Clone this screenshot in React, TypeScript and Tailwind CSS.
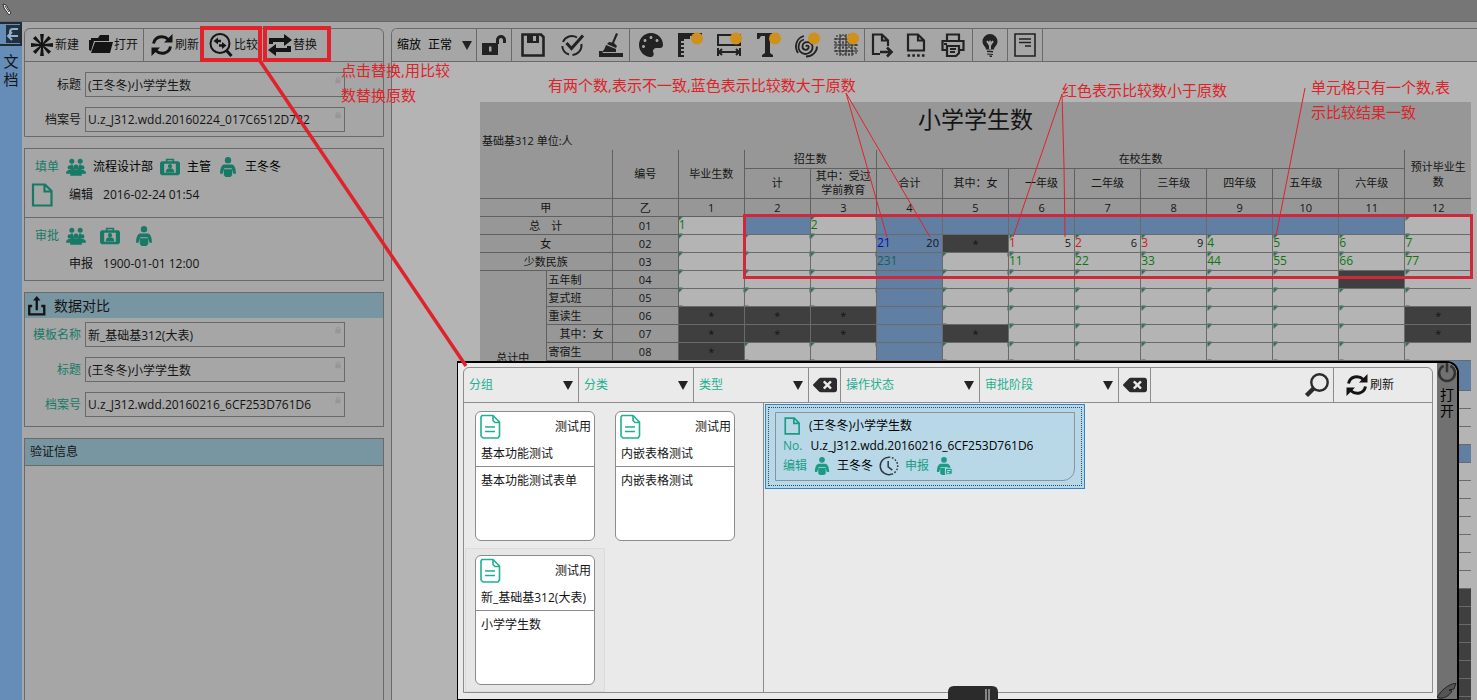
import type { ReactNode } from 'react';
import { clsx } from 'clsx';
import { FaBackspace, FaPalette } from 'react-icons/fa';

interface IconProps {
  className?: string;
}

interface SvgProps extends IconProps {
  children: ReactNode;
  fill?: boolean;
  width?: number;
}

function Svg({ children, className = 'size-6', fill = false, width = 2 }: SvgProps) {
  return (
    <svg
      viewBox="0 0 24 24"
      aria-hidden="true"
      className={clsx('shrink-0 overflow-visible', className)}
      fill={fill ? 'currentColor' : 'none'}
      stroke={fill ? 'none' : 'currentColor'}
      strokeWidth={width}
    >
      {children}
    </svg>
  );
}

const NewIcon = () => (
  <Svg fill>
    {[0, 45, 90, 135, 180, 225, 270, 315].map((deg) => (
      <path key={deg} d="M11.3 12 10.1 1h3.8L12.7 12z" transform={`rotate(${deg} 12 12)`} />
    ))}
  </Svg>
);

const OpenIcon = () => (
  <Svg fill>
    <path d="M0 7h2V5h7l2-3h9v6H5L2 18 0 17zM6 9h18l-3 11H2z" />
  </Svg>
);

const RefreshIcon = ({ className }: IconProps) => (
  <Svg className={className} width={3}>
    <path d="M3.5 10.5C5 3.5 13 1.5 18.5 6.5M20.5 13.5C19 20.5 11 22.5 5.5 17.5" />
    <path d="M22.500 1v8.500H14l3-3zM1.500 23v-8.500H10l-3 3z" fill="currentColor" stroke="none" />
  </Svg>
);

const CompareIcon = () => (
  <Svg width={2}>
    <circle cx="11" cy="10.5" r="9.5" />
    <path d="m17.5 17.5 5 5.5" strokeWidth={3} />
    <path d="M4.5 8 9 4.5v2.200h3v2.600H9v2.200zM17.5 12.500 13 9v2.200h-3v2.600h3V16z" fill="currentColor" stroke="none" />
  </Svg>
);

const SwapIcon = () => (
  <Svg fill>
    <path d="M1 11V5h15V1l8 6-8 6V9H5v2zM23 13v6H8v4l-8-6 8-6v4h11v-2z" />
  </Svg>
);

const LockIcon = ({ className }: IconProps) => (
  <Svg className={className} fill>
    <path d="M4 10h2V8a6 6 0 0 1 12 0v2h2v12H4zm5 0h6V8a3 3 0 0 0-6 0z" />
  </Svg>
);

const UnlockIcon = () => (
  <Svg fill>
    <path d="M0 10h14V7a5 5 0 0 1 10 0v3h-3V7a2 2 0 0 0-4 0v4h-1v11H0zm7 3.500v5h2.500v-5z" fillRule="evenodd" />
  </Svg>
);

const SaveIcon = () => (
  <Svg width={2.6}>
    <path d="M1.5 1.5H20l2.500 2.500v18.500h-21z" />
    <path d="M6 1v9h12V1zm6 2h3v5h-3z" fill="currentColor" fillRule="evenodd" stroke="none" />
  </Svg>
);

const CheckIcon = () => (
  <Svg width={2}>
    <path d="M17 4.500A9.500 9.500 0 0 0 3 9M2.300 13A9.500 9.500 0 0 0 9 21.500M12.500 22A9.500 9.500 0 0 0 21.400 11" />
    <path d="m6.500 10 5 5.500L23 2.500" strokeWidth={3} />
  </Svg>
);

const BroomIcon = () => (
  <Svg fill>
    <path d="m17 0 2 1-4 9 3 3-1 2-9-4 2-2 3 .5zM7 12l10 4v3H3c2-2 3-4 4-7zM0 18h3l1 2h20v4H0z" />
  </Svg>
);

const Badge = () => <circle cx="19" cy="5.5" r="6" fill="#d0901c" stroke="none" />;

const RulerIcon = () => (
  <Svg fill>
    <path d="M0 0h24v6h-2V3h-2v3h-2V3h-2v3h-2V3h-2v3H6v2H3v2h3v2H3v2h3v2H3v2h3v2H3v2h3v2H0z" />
    <Badge />
  </Svg>
);

const SizeIcon = () => (
  <Svg width={2}>
    <path d="M1 2h22v10H1zM1 15v8M23 15v8M2 19h20M5 16l-3 3 3 3M19 16l3 3-3 3" />
    <Badge />
  </Svg>
);

const TypeIcon = () => (
  <Svg fill>
    <path d="M1 0h21v6h-2l-2-3h-4v17l3 2v2H6v-2l3-2V3H5L3 6H1z" />
    <Badge />
  </Svg>
);

const SpiralIcon = () => (
  <Svg width={1.8}>
    <path d="M11 13.500c1-2 3.500-.5 2.500 1.500-1.500 3-6.500 2-6-2 .5-5 9-5.500 10 .5.500 6-6.500 9-10.500 6.500C1.500 17 3 8 9 6.500M3 20C-1 14 1 5 9 3M11 23.500c6 0 11-4.500 11-10" />
    <Badge />
  </Svg>
);

const GridIcon = () => (
  <Svg width={1}>
    <path d="M0 6h24M0 12h24M0 18h24M6 1v22M12 1v22M18 1v22" />
    <path d="M2 3h20v18H2zM9 1v22M15 1v22M0 9h24M0 15h24" strokeDasharray="2 2" />
    <Badge />
  </Svg>
);

const ExportIcon = () => (
  <Svg width={2.2}>
    <path d="M10 21H3V1.500h9l6 6V13M12 1.500v6h6" />
    <path d="M10 19h11M17 14.500l4.500 4.500-4.500 4.500" strokeWidth={2.6} />
  </Svg>
);

const PageDotsIcon = () => (
  <Svg width={2.2}>
    <path d="M4 17.500v-16h10l6 6v10zM14 1.500v6h6" />
    <path d="M3.500 22.500h17" strokeWidth={2.6} strokeDasharray="2.600 2.200" />
  </Svg>
);

const PrintIcon = () => (
  <Svg width={2.2}>
    <path d="M6 8V1.500h12V8M6 17H1.500V8h21v9H18" />
    <path d="M6 13h12v7l-3 3H6zM9 16h6M9 19h5M3 11h3" />
  </Svg>
);

const BulbIcon = () => (
  <Svg fill>
    <path d="M12 1a7.500 7.500 0 0 1 7.500 7.500c0 4-3.500 5-3.500 8H8c0-3-3.500-4-3.500-8A7.500 7.500 0 0 1 12 1zM9 17.500l6 .5v1.500l-6-.5zM9 20.500l6 .5v1l-6-.5zM11 22.500h3V24h-2z" />
    <path d="m9 8 2 3 1-2 1 2 2-3M12 11v5" fill="none" stroke="#a6a6a6" />
  </Svg>
);

const NoteIcon = () => (
  <Svg width={1.6}>
    <path d="M2 1h20v22H2zM6 6h12M6 9.500h12M12 13h6" />
  </Svg>
);

const GroupIcon = ({ className = 'size-5' }: IconProps) => (
  <Svg className={className} fill>
    <circle cx="7" cy="5" r="3" />
    <circle cx="17" cy="5" r="3" />
    <circle cx="4.5" cy="12.5" r="2.6" />
    <circle cx="12" cy="12" r="3" />
    <circle cx="19.5" cy="12.5" r="2.6" />
    <path d="M0 20c0-4 3-4.500 5-4.500 2-.5 0-4 1-6.500h2l2 6h4l2-6h2c1 2.500-1 6 1 6.500 2 0 5 .5 5 4.500h-5v2.500H5V20z" />
  </Svg>
);

const BadgeCardIcon = ({ className = 'size-5' }: IconProps) => (
  <Svg className={className} fill>
    <path fillRule="evenodd" d="M7 5V2h10v3h5l2 2v13l-2 2H2l-2-2V7l2-2zm2 0h6V4H9zM5 8v11h14V8z" />
    <circle cx="12" cy="11" r="2.5" />
    <path d="M7 18.500c0-4 2-5 5-5s5 1 5 5z" />
  </Svg>
);

const PersonIcon = ({ className = 'size-5', children }: IconProps & { children?: ReactNode }) => (
  <Svg className={className} fill>
    <circle cx="12" cy="3.8" r="3.8" />
    <path d="M7 9h10c3 1 4.500 5 4.500 11h-3l-2-6.500h-9l-2 6.500h-3C2.500 14 4 10 7 9z" />
    <path d="M7 14.800h10v6.700L15 24H9l-2-2.500z" />
    {children}
  </Svg>
);

const FileIcon = ({ className = 'size-6' }: IconProps) => (
  <Svg className={className} width={2.2}>
    <path d="M3 1.500h12l6.500 6.500v14.500H3zM14.500 1.500V8.500h7" />
  </Svg>
);

const FormIcon = () => (
  <Svg className="size-6 text-[#1fb092]" width={1.6}>
    <path d="M3 .5h11l6.500 6.500V21L19 23H4l-2-2V2zM14 .5v5l2 2h4.500M6 12h10M6 16.500h10" />
  </Svg>
);

const UploadIcon = () => (
  <Svg className="size-5" width={2.8}>
    <path d="M5 12H1.500v10h18V12H16M10.500 17V4" />
    <path d="m6 5.500 4.500-5.500L15 5.500z" fill="currentColor" stroke="none" />
  </Svg>
);

const ClockIcon = () => (
  <Svg className="size-5 text-[#303a42]" width={1.8}>
    <path d="M13 1.500A10.500 10.500 0 1 0 15 22M11 6v7l5 4" />
    <path d="M15 22A10.500 10.500 0 0 0 13 1.500" strokeDasharray="2 2" />
  </Svg>
);

const SearchIcon = () => (
  <Svg width={2.4}>
    <circle cx="14.5" cy="9.5" r="8.200" />
    <path d="m8.500 15.500-7 7" strokeWidth={4.5} />
  </Svg>
);

const PowerIcon = () => (
  <Svg className="size-5" width={3}>
    <path d="M8 3.500a9.500 9.500 0 1 0 8 0M12 0v11" />
  </Svg>
);

interface FieldProps {
  id: string;
  label: string;
  value: string;
  accent?: boolean;
}

function Field({ id, label, value, accent }: FieldProps) {
  return (
    <div className="flex items-center gap-1">
      <label htmlFor={id} className={clsx('w-14 text-right', accent && 'text-[#167a66]')}>
        {label}
      </label>
      <div className="relative w-[260px]">
        <input id={id} readOnly defaultValue={value} className="block h-[25px] w-full border border-[#6a6a6a] px-[2px]" />
        <LockIcon className="absolute top-1 right-[3px] size-2 text-[#969696]" />
      </div>
    </div>
  );
}

function ToolButton({ icon, label }: { icon: ReactNode; label: string }) {
  return (
    <button type="button" className="flex items-center gap-px">
      {icon}
      {label}
    </button>
  );
}

function LeftPanel() {
  return (
    <aside className="flex w-[369px] shrink-0 flex-col gap-[11px] overflow-hidden pt-[6px] pr-[7px] pl-[2px]">
      <section className="h-[109px] shrink-0 rounded-t-md border border-[#6a6a6a]">
        <div className="flex h-[33px] items-center border-b border-[#6a6a6a]">
          <div className="flex h-full items-center gap-[10px] border-r border-[#6a6a6a] px-[5px]">
            <ToolButton icon={<NewIcon />} label="新建" />
            <ToolButton icon={<OpenIcon />} label="打开" />
          </div>
          <div className="flex items-center gap-[10px] pl-[6px]">
            <ToolButton icon={<RefreshIcon />} label="刷新" />
            <ToolButton icon={<CompareIcon />} label="比较" />
            <ToolButton icon={<SwapIcon />} label="替换" />
          </div>
        </div>
        <div className="flex flex-col gap-[10px] pt-[10px]">
          <Field id="title" label="标题" value="(王冬冬)小学学生数" />
          <Field id="code" label="档案号" value="U.z_J312.wdd.20160224_017C6512D722" />
        </div>
      </section>

      <section className="h-[133px] shrink-0 border border-[#6a6a6a]">
        <div className="h-[69px] border-b border-[#6a6a6a] pt-2">
          <div className="flex h-5 items-center gap-[7px] pl-[10px] text-[#167a66]">
            <span>填单</span>
            <GroupIcon />
            <span className="text-black">流程设计部</span>
            <BadgeCardIcon />
            <span className="text-black">主管</span>
            <PersonIcon />
            <span className="text-black">王冬冬</span>
          </div>
          <div className="mt-[6px] flex h-6 items-center pl-[5px]">
            <FileIcon className="size-6 text-[#167a66]" />
            <span className="ml-[15px]">编辑</span>
            <span className="ml-[10px]">2016-02-24 01:54</span>
          </div>
        </div>
        <div className="pt-2">
          <div className="flex h-5 items-center pl-[10px] text-[#167a66]">
            <span>审批</span>
            <GroupIcon className="ml-[7px] size-5" />
            <BadgeCardIcon className="ml-[14px] size-5" />
            <PersonIcon className="ml-[14px] size-5" />
          </div>
          <div className="mt-[6px] flex h-6 items-center pl-11">
            <span>申报</span>
            <span className="ml-[10px]">1900-01-01 12:00</span>
          </div>
        </div>
      </section>

      <section className="h-[135px] shrink-0 border border-[#6a6a6a]">
        <h2 className="flex h-[25px] items-center gap-[6px] bg-[#7896a2] pl-[3px] text-sm">
          <UploadIcon />
          数据对比
        </h2>
        <div className="flex flex-col gap-[10px] pt-1">
          <Field id="cmp-template" label="模板名称" value="新_基础基312(大表)" accent />
          <Field id="cmp-title" label="标题" value="(王冬冬)小学学生数" accent />
          <Field id="cmp-code" label="档案号" value="U.z_J312.wdd.20160216_6CF253D761D6" accent />
        </div>
      </section>

      <section className="flex-1 border border-b-0 border-[#6a6a6a]">
        <h2 className="flex h-[27px] items-center border-b border-[#6a6a6a] bg-[#7896a2] pl-[5px]">验证信息</h2>
      </section>
    </aside>
  );
}

interface ToolGroup {
  name: string;
  wide: boolean;
  tools: { name: string; icon: ReactNode }[];
}

const toolGroups: ToolGroup[] = [
  { name: 'lock', wide: false, tools: [{ name: '解锁', icon: <UnlockIcon /> }] },
  {
    name: 'file',
    wide: true,
    tools: [
      { name: '保存', icon: <SaveIcon /> },
      { name: '校验', icon: <CheckIcon /> },
      { name: '清除', icon: <BroomIcon /> },
    ],
  },
  {
    name: 'style',
    wide: true,
    tools: [
      { name: '颜色', icon: <FaPalette className="size-6" /> },
      { name: '标尺', icon: <RulerIcon /> },
      { name: '尺寸', icon: <SizeIcon /> },
      { name: '字体', icon: <TypeIcon /> },
      { name: '指纹', icon: <SpiralIcon /> },
      { name: '网格', icon: <GridIcon /> },
    ],
  },
  {
    name: 'output',
    wide: false,
    tools: [
      { name: '导出', icon: <ExportIcon /> },
      { name: '页面', icon: <PageDotsIcon /> },
      { name: '打印', icon: <PrintIcon /> },
    ],
  },
  { name: 'tip', wide: false, tools: [{ name: '提示', icon: <BulbIcon /> }] },
  { name: 'note', wide: false, tools: [{ name: '备注', icon: <NoteIcon /> }] },
];

function Triangle() {
  return (
    <svg viewBox="0 0 10 9" aria-hidden="true" className="h-[9px] w-[10px] fill-[#222]">
      <path d="M0 0h10L5 9z" />
    </svg>
  );
}

function MainToolbar() {
  return (
    <div className="flex h-[33px] shrink-0 border-b border-[#6a6a6a] bg-[#a6a6a6] text-[#222]">
      <div className="flex w-[85px] items-center gap-[7px] border-r border-[#6a6a6a] pl-[5px] text-black">
        <label htmlFor="zoom">缩放</label>
        <div className="relative">
          <select id="zoom" className="w-11 appearance-none">
            <option>正常</option>
          </select>
          <span className="pointer-events-none absolute top-0 right-0 bottom-0 flex items-center">
            <Triangle />
          </span>
        </div>
      </div>
      {toolGroups.map((group) => (
        <div key={group.name} className="flex border-r border-[#6a6a6a]">
          {group.tools.map((tool) => (
            <button
              key={tool.name}
              type="button"
              aria-label={tool.name}
              className={clsx('flex items-center justify-center', group.wide ? 'w-[39px] pl-[3px]' : 'w-[34px] last:not-first:w-[39px]')}
            >
              {tool.icon}
            </button>
          ))}
        </div>
      ))}
    </div>
  );
}

// '' editable, 'B' calculated, '*' not applicable, 'X' locked, 'a|b' compared value and original
type Cell = string;

interface Row {
  id: number;
  code?: string;
  label?: string;
  wide?: boolean;
  cells: Cell[];
}

const plain: Cell[] = ['', '', '', 'B', '', '', '', '', '', '', '', ''];
const calculated: Cell[] = Array(12).fill('B');
const locked: Cell[] = Array(12).fill('X');

const rows: Row[] = [
  { id: 1, code: '01', label: '总　计', wide: true, cells: ['1', 'B', '2', 'B', 'B', 'B', 'B', 'B', 'B', 'B', 'B', ''] },
  { id: 2, code: '02', label: '女', wide: true, cells: ['', '', '', 'B21|20', '*', '1|5', '2|6', '3|9', '4', '5', '6', '7'] },
  { id: 3, code: '03', label: '少数民族', wide: true, cells: ['', '', '', 'B231', '', '11', '22', '33', '44', '55', '66', '77'] },
  { id: 4, code: '04', label: '五年制', cells: ['', '', '', 'B', '', '', '', '', '', '', 'X', ''] },
  { id: 5, code: '05', label: '复式班', cells: plain },
  { id: 6, code: '06', label: '重读生', cells: ['*', '*', '*', 'B', '', '', '', '', '', '', '', '*'] },
  { id: 7, code: '07', label: '　其中：女', cells: ['*', '*', '*', 'B', '*', '', '', '', '', '', '', '*'] },
  { id: 8, code: '08', label: '寄宿生', cells: ['*', '', '', 'B', '', '', '', '', '', '', '', ''] },
  { id: 9, cells: calculated },
  { id: 10, cells: plain },
  { id: 11, cells: plain },
  { id: 12, cells: plain },
  { id: 13, cells: calculated },
  { id: 14, cells: plain },
  { id: 15, cells: plain },
  { id: 16, cells: plain },
  { id: 17, cells: plain },
  { id: 18, cells: plain },
  { id: 19, cells: plain },
  { id: 20, cells: plain },
  { id: 21, cells: locked },
  { id: 22, cells: locked },
  { id: 23, cells: locked },
  { id: 24, cells: locked },
  { id: 25, cells: locked },
  { id: 26, cells: locked },
  { id: 27, cells: locked },
];

function valueColor(current: string, original: string | undefined, isBlue: boolean) {
  if (original === undefined) return isBlue ? 'text-[#16605a]' : 'text-[#0c760c]';
  return Number(current) > Number(original) ? 'text-[#0a0ac0]' : 'text-[#d01818]';
}

function DataCell({ value }: { value: Cell }) {
  if (value === '*' || value === 'X') {
    return <td className="border border-[#6a6a6a] bg-[#3f3f3f] p-0 text-center">{value === '*' && '*'}</td>;
  }
  const isBlue = value.startsWith('B');
  const [current, original] = value.replace('B', '').split('|');
  return (
    <td
      className={clsx(
        'border border-[#6a6a6a] p-0',
        isBlue ? 'bg-[#607fa3]' : 'bg-[#b4b4b4] bg-[linear-gradient(135deg,#26705a_3px,transparent_3px)]'
      )}
    >
      {current && (
        <div className="flex justify-between pr-[3px] text-xs leading-4">
          {/* 1 < 5 style comparisons only make sense when an original is present */}
          <span className={valueColor(current, original, isBlue)}>{current}</span>
          {original && <span className="text-[11px]">{original}</span>}
        </div>
      )}
    </td>
  );
}

function Head({ children, ...rest }: { children?: ReactNode; colSpan?: number; rowSpan?: number }) {
  return (
    <th className="border border-[#606060] p-0 font-normal" {...rest}>
      {children}
    </th>
  );
}

const grades = ['合计', '其中：女', '一年级', '二年级', '三年级', '四年级', '五年级', '六年级'];

function Sheet() {
  return (
    <div className="mt-10 mr-[6px] ml-[88px] bg-[#979797]">
      <div className="flex h-12 flex-col">
        <h1 className="text-center text-[23px] leading-[34px]">小学学生数</h1>
        <p className="pl-[2px] text-[11px] leading-[10px]">基础基312 单位:人</p>
      </div>
      <table className="w-full table-fixed border-collapse border-hidden text-[11px] leading-[15px]">
        <colgroup>
          {Array.from({ length: 15 }, (_, i) => (
            <col key={i} />
          ))}
        </colgroup>
        <thead>
          <tr className="h-[18px]">
            <Head colSpan={2} rowSpan={2} />
            <Head rowSpan={2}>编号</Head>
            <Head rowSpan={2}>毕业生数</Head>
            <Head colSpan={2}>招生数</Head>
            <Head colSpan={8}>在校生数</Head>
            <Head rowSpan={2}>预计毕业生数</Head>
          </tr>
          <tr className="h-[30px] leading-[14px]">
            <Head>计</Head>
            <Head>其中：受过学前教育</Head>
            {grades.map((grade) => (
              <Head key={grade}>{grade}</Head>
            ))}
          </tr>
          <tr className="h-[18px]">
            <Head colSpan={2}>甲</Head>
            <Head>乙</Head>
            {Array.from({ length: 12 }, (_, i) => (
              <Head key={i}>{i + 1}</Head>
            ))}
          </tr>
        </thead>
        <tbody>
          {rows.map((row) => (
            <tr key={row.id} className={row.id === 9 ? 'h-[30px]' : 'h-[18px]'}>
              {row.id === 4 && <Head rowSpan={9}>总计中</Head>}
              {row.wide ? (
                <Head colSpan={2}>{row.label}</Head>
              ) : (
                <td className="border border-[#606060] p-0 pl-[2px]" colSpan={row.id > 12 ? 2 : 1}>
                  {row.label}
                </td>
              )}
              <Head>{row.code}</Head>
              {row.cells.map((cell, i) => (
                <DataCell key={i} value={cell} />
              ))}
            </tr>
          ))}
        </tbody>
      </table>
    </div>
  );
}

function Filter({ id, label, className }: { id: string; label: string; className: string }) {
  return (
    <div className={clsx('relative shrink-0 border-r border-[#8c8c8c]', className)}>
      <select id={id} aria-label={label} className="h-full w-full appearance-none px-[5px] text-[#1fb092]">
        <option>{label}</option>
      </select>
      <span className="pointer-events-none absolute top-0 right-[5px] bottom-0 flex items-center">
        <Triangle />
      </span>
    </div>
  );
}

function ClearButton() {
  return (
    <button type="button" aria-label="清除" className="flex w-8 shrink-0 items-center justify-center border-r border-[#8c8c8c] text-[#2b2b2b]">
      <FaBackspace className="size-6" />
    </button>
  );
}

const templates = [
  { name: '基本功能测试', form: '基本功能测试表单' },
  { name: '内嵌表格测试', form: '内嵌表格测试' },
  { name: '新_基础基312(大表)', form: '小学学生数', selected: true },
];

function TemplateTile({ name, form, selected }: { name: string; form: string; selected?: boolean }) {
  return (
    <button
      type="button"
      className={clsx('h-36 w-[140px] border px-[9px] pt-[6px] pb-2 text-left', selected ? 'border-[#dcdcdc] bg-[#e6e6e6]' : 'border-transparent')}
    >
      <span className="flex h-[130px] flex-col rounded-md border border-[#8c8c8c] bg-white">
        <span className="flex h-[30px] items-center justify-between px-[3px]">
          <FormIcon />
          测试用
        </span>
        <span className="h-[25px] border-b border-[#8c8c8c] px-[5px] leading-6">{name}</span>
        <span className="px-[5px] leading-7">{form}</span>
      </span>
    </button>
  );
}

function OpenDialog() {
  return (
    <div
      role="dialog"
      aria-label="打开"
      className="absolute top-[361px] right-[18px] bottom-0 left-[457px] flex rounded-tr-xl border-2 border-b border-l border-black bg-[#eaeaea]"
    >
      <div className="flex min-w-0 flex-1 flex-col pt-1 pr-1 pb-[6px] pl-[5px]">
        <div className="flex min-h-0 flex-1 flex-col rounded-t-md border border-[#8c8c8c]">
          <div className="flex h-[35px] shrink-0 border-b border-[#8c8c8c]">
            <Filter id="group" label="分组" className="w-[115px]" />
            <Filter id="category" label="分类" className="w-[115px]" />
            <Filter id="type" label="类型" className="w-[115px]" />
            <ClearButton />
            <Filter id="status" label="操作状态" className="w-[139px]" />
            <Filter id="stage" label="审批阶段" className="w-[139px]" />
            <ClearButton />
            <div className="flex min-w-0 flex-1 items-center border-r border-[#8c8c8c] pr-1 text-[#2b2b2b]">
              <input aria-label="搜索" className="min-w-0 flex-1 px-2" />
              <button type="button" aria-label="搜索">
                <SearchIcon />
              </button>
            </div>
            <button type="button" className="flex w-[98px] items-center gap-px pl-[11px]">
              <RefreshIcon />
              刷新
            </button>
          </div>
          <div className="flex min-h-0 flex-1">
            <div className="flex w-[300px] shrink-0 flex-wrap content-start border-r border-[#8c8c8c] pt-px pl-px">
              {templates.map((template) => (
                <TemplateTile key={template.name} {...template} />
              ))}
            </div>
            <div className="p-px">
              <div className="w-80 border border-[#2f86c6] bg-[#b8d8e8] p-[2px]">
                <div className="border border-dotted border-[#23506e] px-[6px] py-1">
                  <div className="flex h-[69px] flex-col justify-between rounded-br-xl border border-[#8696a0] px-[7px] py-1 text-[#1a9c84]">
                    <div className="flex items-center gap-2">
                      <FileIcon className="size-[18px]" />
                      <span className="text-black">(王冬冬)小学学生数</span>
                    </div>
                    <div className="flex gap-2 leading-4">
                      <span>No.</span>
                      <span className="text-black">U.z_J312.wdd.20160216_6CF253D761D6</span>
                    </div>
                    <div className="flex items-center gap-[6px]">
                      <span>编辑</span>
                      <PersonIcon className="size-[18px]" />
                      <span className="text-black">王冬冬</span>
                      <ClockIcon />
                      <span>申报</span>
                      <PersonIcon className="size-[18px]">
                        <path d="M14 15h9v8h-9zM16 18h5M16 20.500h3" stroke="#b8d8e8" strokeWidth="1.500" />
                      </PersonIcon>
                    </div>
                  </div>
                </div>
              </div>
            </div>
          </div>
        </div>
      </div>
      <div className="flex w-5 flex-col items-center justify-between rounded-tr-[10px] bg-[#717171]">
        <div className="flex flex-col items-center gap-1 text-[#333]">
          <PowerIcon />
          <span className="w-4 text-center text-sm leading-4 text-black">打开</span>
        </div>
        <svg viewBox="0 0 20 16" aria-hidden="true" className="h-4 w-5 fill-[#555] stroke-[#222]">
          <path d="M0 14C6 6 10 2 19 0l-2 6-5 1 3 1C12 13 7 16 2 15z" />
        </svg>
      </div>
    </div>
  );
}

// Red markup drawn over the whole window
function Annotations() {
  return (
    <div className="pointer-events-none absolute inset-0 text-[15px] leading-[25px] whitespace-nowrap text-[#dc2328]">
      <svg aria-hidden="true" className="absolute inset-0 h-full w-full" fill="none" stroke="#e0222c">
        <g strokeWidth="4">
          <path d="M202 28h58v32h-58zM265 28h64v32h-64z" />
          <path d="m260 61 206 305" strokeWidth="3.5" />
        </g>
        <path d="M744.500 215.500h727v62h-727z" strokeWidth="3" stroke="#d0283a" />
        <path d="m846 93 41 144M846 93l84 144M1062 94l-49 143M1062 94l2 72 1 71M1305 88l-29 148" />
      </svg>
      <p className="absolute top-[58px] left-[341px]">
        点击替换,用比较
        <br />
        数替换原数
      </p>
      <p className="absolute top-[73px] left-[548px]">有两个数,表示不一致,蓝色表示比较数大于原数</p>
      <p className="absolute top-[78px] left-[1062px]">红色表示比较数小于原数</p>
      <p className="absolute top-[75px] left-[1311px]">
        单元格只有一个数,表
        <br />
        示比较结果一致
      </p>
    </div>
  );
}

export default function App() {
  return (
    <div className="relative flex h-screen flex-col overflow-hidden bg-[#a6a6a6] font-['Open_Sans','Noto_Sans_CJK_SC',sans-serif] text-xs text-[#141414]">
      <header className="h-[22px] shrink-0 border-b border-[#686868] bg-[#767676]">
        <svg viewBox="0 0 12 14" aria-hidden="true" className="ml-px h-[18px] w-3 fill-white stroke-[#333]">
          <path d="M2 2l3 1 5 8-2 2-5-7zM4 4l4 6" />
        </svg>
      </header>

      <div className="flex min-h-0 flex-1">
        <nav className="flex w-[22px] shrink-0 flex-col items-center bg-[#658db8]">
          <button type="button" aria-label="返回" className="flex h-6 w-full items-center justify-end border-2 border-l-0 border-[#1e2b3a]">
            <svg viewBox="0 0 14 18" aria-hidden="true" className="h-[18px] w-[14px]">
              <path d="M0 0h14v18H0z" fill="#26303c" />
              <path d="M12 4H7a3 3 0 0 0-3 3v4M2 11h10M6 7l-4 4 4 4" fill="none" stroke="#8fb0d0" strokeWidth="2" />
            </svg>
          </button>
          <a href="#doc" className="mt-[6px] w-4 text-center text-[15px] leading-[18px]">
            文档
          </a>
        </nav>

        <LeftPanel />

        <main className="mt-[6px] flex min-w-0 flex-1 flex-col overflow-hidden rounded-tl-md border-t border-l border-[#6a6a6a] bg-[#b4b4b4]">
          <MainToolbar />
          <Sheet />
        </main>
      </div>

      <OpenDialog />
      <svg viewBox="0 0 50 14" aria-hidden="true" className="absolute bottom-0 left-[948px] h-[14px] w-[50px]">
        <path d="M0 14V6q0-6 6-6h38q6 0 6 6v8z" fill="#2b2b2b" />
        <path d="M38 3v11M41 3v11" stroke="#e0e0e0" strokeWidth="1" />
      </svg>
      <Annotations />
    </div>
  );
}
